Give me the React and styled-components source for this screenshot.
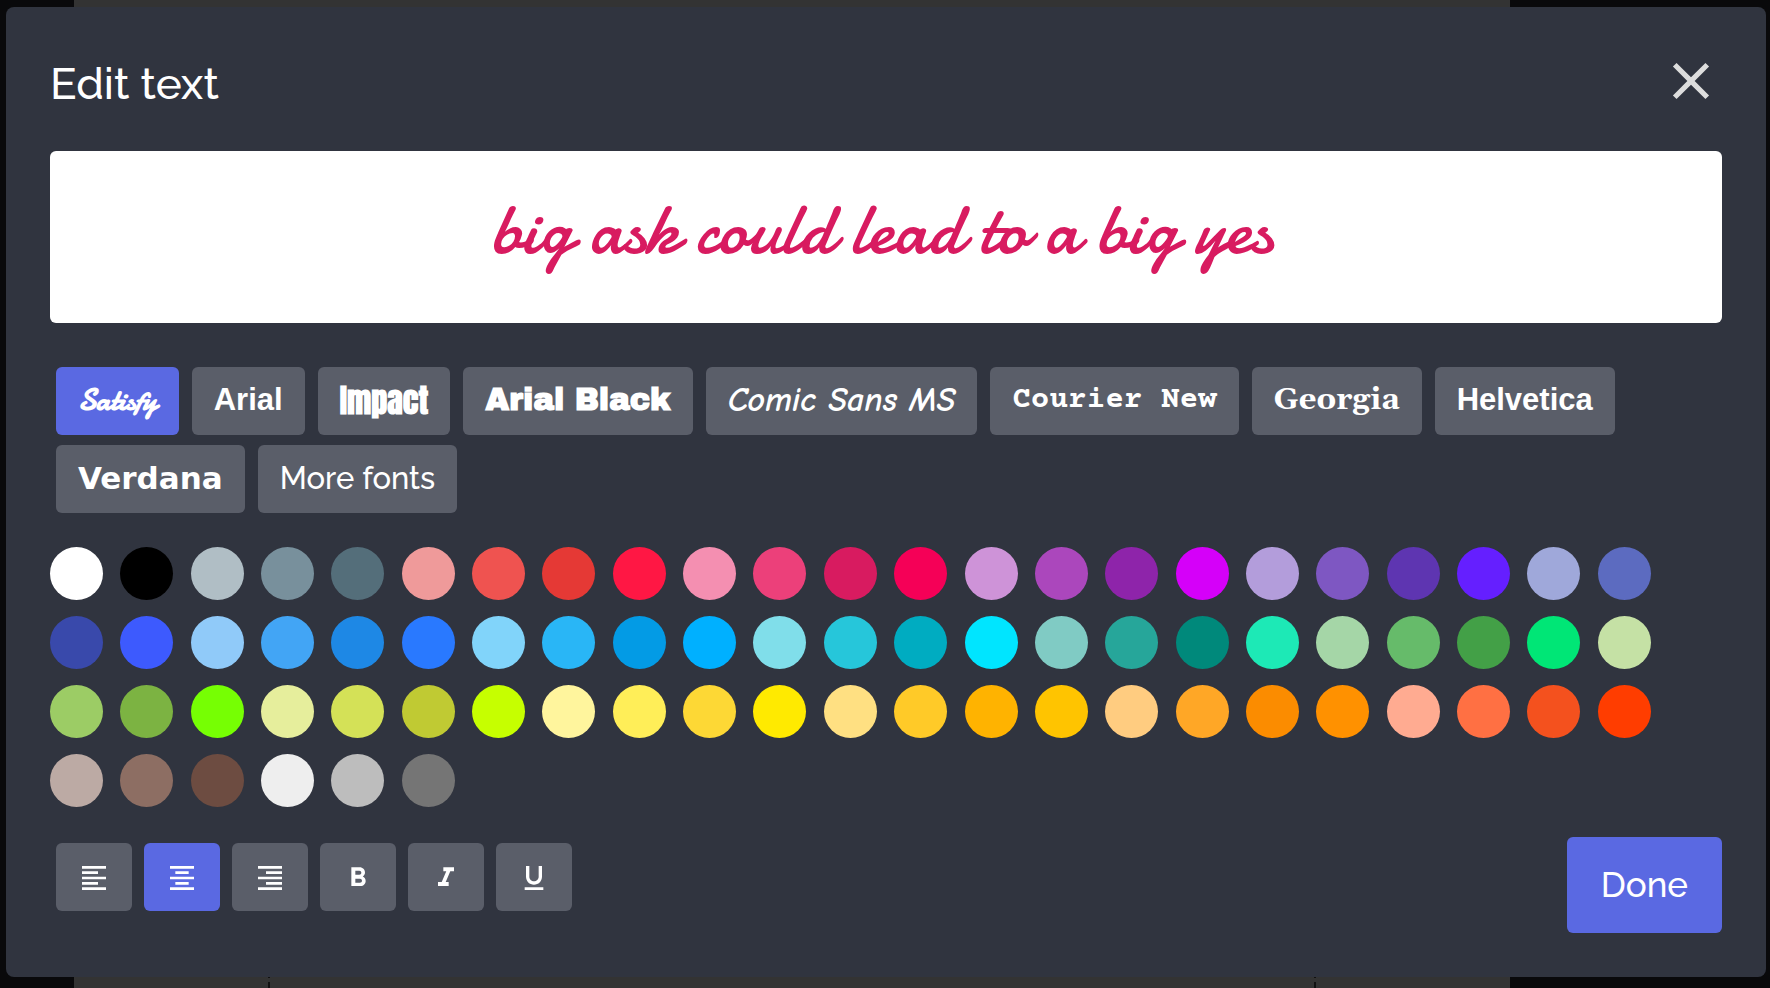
import React, { useState } from "react";
import styled, { createGlobalStyle, css } from "styled-components";
import {
  MdClose,
  MdFormatAlignCenter,
  MdFormatAlignLeft,
  MdFormatAlignRight,
  MdFormatBold,
  MdFormatItalic,
  MdFormatUnderlined,
} from "react-icons/md";

const sans = `Raleway, Lato, "Open Sans", sans-serif`;
const script = `Satisfy, Damion, Cookie, Yellowtail, Courgette, "Dancing Script", "Liberation Serif", cursive`;

const GlobalStyle = createGlobalStyle`
  * {
    box-sizing: border-box;
  }
  body {
    margin: 0;
    background: #09090b;
    color: #fff;
    font-family: ${sans};
  }
  button,
  input {
    font: inherit;
  }
`;

const Page = styled.div`
  position: relative;
  min-height: 100vh;
  padding: 7px 4px 11px 6px;
`;

const Canvas = styled.div`
  position: absolute;
  inset: 0 260px 0 74px;
  padding: 12px 194px 0;
  background: #333;
`;

const Guides = styled.div`
  height: 100%;
  border: dashed #111;
  border-width: 0 2px;
`;

const Dialog = styled.section`
  position: relative;
  padding: 43px 44px 44px;
  border-radius: 8px;
  background: #30343f;
`;

const Header = styled.header`
  display: flex;
  align-items: flex-end;
  justify-content: space-between;
  margin-bottom: 39px;
`;

const Title = styled.h1`
  margin: 0;
  font-size: 44px;
  font-weight: 500;
  line-height: 56px;
`;

const CloseButton = styled.button`
  display: flex;
  padding: 0;
  border: 0;
  background: none;
  color: #ddd;
  font-size: 62px;
  cursor: pointer;
`;

const TextInput = styled.input`
  display: block;
  width: 100%;
  height: 172px;
  padding: 0 32px 16px 24px;
  border: 0;
  border-radius: 6px;
  outline: 0;
  background: #fff;
  color: ${({ $color }) => $color};
  font-family: ${({ $family }) => $family};
  font-size: 72px;
  font-style: ${({ $italic }) => ($italic ? "italic" : "normal")};
  font-weight: ${({ $bold }) => ($bold ? 700 : 500)};
  text-align: ${({ $align }) => $align};
  text-decoration: ${({ $underline }) => ($underline ? "underline" : "none")};
`;

const buttonLook = css`
  display: flex;
  align-items: center;
  justify-content: center;
  height: 68px;
  border: 0;
  border-radius: 6px;
  background: ${({ $active }) => ($active ? "#5a69e2" : "#5a5e69")};
  color: #fff;
  cursor: pointer;
`;

const FontList = styled.div`
  display: flex;
  flex-wrap: wrap;
  gap: 10px 13px;
  margin: 44px 6px 34px;
`;

const FontButton = styled.button`
  ${buttonLook}
  padding: 0 22px 2px;
  font-family: ${({ $family }) => $family};
  font-size: ${({ $size }) => $size || 31}px;
  font-style: ${({ $italic }) => ($italic ? "italic" : "normal")};
  font-weight: ${({ $weight }) => $weight || 700};
  white-space: nowrap;
`;

const Palette = styled.div`
  display: grid;
  grid-template-columns: repeat(auto-fill, minmax(70px, 1fr));
  gap: 16px 0;
  margin: 0 54px 30px 0;
`;

const Swatch = styled.button`
  width: 53px;
  height: 53px;
  padding: 0;
  border: 0;
  border-radius: 50%;
  background: ${({ $color }) => $color};
  cursor: pointer;
`;

const Footer = styled.footer`
  display: flex;
  align-items: flex-start;
  justify-content: space-between;
`;

const Toolbar = styled.div`
  display: flex;
  gap: 12px;
  padding: 6px;
`;

const ToolButton = styled.button`
  ${buttonLook}
  width: 76px;
  padding: 2px 0 0;
  font-size: 32px;
`;

const DoneButton = styled.button`
  height: 96px;
  padding: 0 34px 2px;
  border: 0;
  border-radius: 6px;
  background: #5a69e2;
  color: #fff;
  font-size: 35px;
  font-weight: 500;
  cursor: pointer;
`;

const fonts = [
  { name: "Satisfy", family: script },
  { name: "Arial", family: `"Liberation Sans", sans-serif` },
  { name: "Impact", family: `Impact, Anton, "Open Sans", sans-serif`, size: 32 },
  { name: "Arial Black", family: `"Arial Black", "Archivo Black", Inter, sans-serif` },
  { name: "Comic Sans MS", family: `"Comic Sans MS", "Comic Neue", Lato, cursive`, size: 34, italic: true },
  { name: "Courier New", family: `"Courier Prime", "Liberation Mono", monospace` },
  { name: "Georgia", family: `Georgia, Gelasio, "Liberation Serif", serif` },
  { name: "Helvetica", family: `"Liberation Sans", sans-serif` },
  { name: "Verdana", family: `Verdana, "DejaVu Sans", sans-serif` },
];

const colors = [
  "#ffffff", "#000000", "#b0bec5", "#78909c", "#546e7a", "#ef9a9a",
  "#ef5350", "#e53935", "#ff1744", "#f48fb1", "#ec407a", "#d81b60",
  "#f50057", "#ce93d8", "#ab47bc", "#8e24aa", "#d500f9", "#b39ddb",
  "#7e57c2", "#5e35b1", "#651fff", "#9fa8da", "#5c6bc0", "#3949ab",
  "#3d5afe", "#90caf9", "#42a5f5", "#1e88e5", "#2979ff", "#81d4fa",
  "#29b6f6", "#039be5", "#00b0ff", "#80deea", "#26c6da", "#00acc1",
  "#00e5ff", "#80cbc4", "#26a69a", "#00897b", "#1de9b6", "#a5d6a7",
  "#66bb6a", "#43a047", "#00e676", "#c5e1a5", "#9ccc65", "#7cb342",
  "#76ff03", "#e6ee9c", "#d4e157", "#c0ca33", "#c6ff00", "#fff59d",
  "#ffee58", "#fdd835", "#ffea00", "#ffe082", "#ffca28", "#ffb300",
  "#ffc400", "#ffcc80", "#ffa726", "#fb8c00", "#ff9100", "#ffab91",
  "#ff7043", "#f4511e", "#ff3d00", "#bcaaa4", "#8d6e63", "#6d4c41",
  "#eeeeee", "#bdbdbd", "#757575",
];

const alignments = [
  { value: "left", Icon: MdFormatAlignLeft },
  { value: "center", Icon: MdFormatAlignCenter },
  { value: "right", Icon: MdFormatAlignRight },
];

const styles = [
  { value: "bold", Icon: MdFormatBold },
  { value: "italic", Icon: MdFormatItalic },
  { value: "underline", Icon: MdFormatUnderlined },
];

function App() {
  const [text, setText] = useState("big ask could lead to a big yes");
  const [font, setFont] = useState(fonts[0]);
  const [color, setColor] = useState("#d81b60");
  const [align, setAlign] = useState("center");
  const [marks, setMarks] = useState({});

  const toggleMark = (mark) => {
    setMarks({ ...marks, [mark]: !marks[mark] });
  };

  return (
    <Page>
      <GlobalStyle />
      <Canvas>
        <Guides />
      </Canvas>
      <Dialog role="dialog" aria-labelledby="dialog-title">
        <Header>
          <Title id="dialog-title">Edit text</Title>
          <CloseButton type="button" aria-label="Close">
            <MdClose />
          </CloseButton>
        </Header>
        <TextInput
          type="text"
          aria-label="Text"
          value={text}
          onChange={(e) => setText(e.target.value)}
          $family={font.family}
          $italic={font.italic || marks.italic}
          $bold={marks.bold}
          $underline={marks.underline}
          $align={align}
          $color={color}
        />
        <FontList>
          {fonts.map((item) => (
            <FontButton
              key={item.name}
              type="button"
              onClick={() => setFont(item)}
              $active={item.name === font.name}
              $family={item.family}
              $size={item.size}
              $italic={item.italic}
            >
              {item.name}
            </FontButton>
          ))}
          <FontButton type="button" $family={sans} $weight={500}>
            More fonts
          </FontButton>
        </FontList>
        <Palette>
          {colors.map((value) => (
            <Swatch
              key={value}
              type="button"
              aria-label={value}
              onClick={() => setColor(value)}
              $color={value}
            />
          ))}
        </Palette>
        <Footer>
          <Toolbar>
            {alignments.map(({ value, Icon }) => (
              <ToolButton
                key={value}
                type="button"
                aria-label={`Align ${value}`}
                onClick={() => setAlign(value)}
                $active={value === align}
              >
                <Icon />
              </ToolButton>
            ))}
            {styles.map(({ value, Icon }) => (
              <ToolButton
                key={value}
                type="button"
                aria-label={value}
                onClick={() => toggleMark(value)}
                $active={marks[value]}
              >
                <Icon />
              </ToolButton>
            ))}
          </Toolbar>
          <DoneButton type="button">Done</DoneButton>
        </Footer>
      </Dialog>
    </Page>
  );
}

export default App;
